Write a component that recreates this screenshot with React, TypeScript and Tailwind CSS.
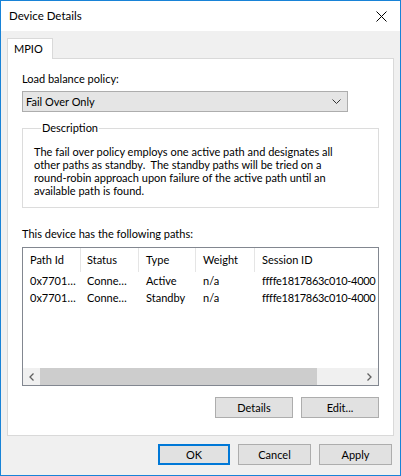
import React from "react";

const rows = [
  { id: "0x7701…", status: "Conne…", type: "Active", weight: "n/a", session: "ffffe1817863c010-4000" },
  { id: "0x7701…", status: "Conne…", type: "Standby", weight: "n/a", session: "ffffe1817863c010-4000" },
];

const cols = [
  { label: "Path Id", w: "w-[58px]", pl: "pl-[7px]" },
  { label: "Status", w: "w-[58px]", pl: "pl-[6px]" },
  { label: "Type", w: "w-[57px]", pl: "pl-[7px]" },
  { label: "Weight", w: "w-[59px]", pl: "pl-[7px]" },
  { label: "Session ID", w: "flex-1", pl: "pl-[7px]" },
];

function WinButton({
  children,
  primary,
  className,
}: {
  children: React.ReactNode;
  primary?: boolean;
  className?: string;
}) {
  return (
    <button
      className={`h-[21px] bg-[#e1e1e1] text-[11px] text-black flex items-center justify-center ${
        primary ? "border-2 border-[#0078d7]" : "border border-[#adadad]"
      } ${className ?? ""}`}
    >
      {children}
    </button>
  );
}

export default function App() {
  return (
    <div
      className="w-[401px] h-[476px] border border-[#1883d7] bg-[#f0f0f0] flex flex-col text-black text-[11px] leading-[16px]"
      style={{ fontFamily: 'Lato, "Noto Sans", sans-serif' }}
    >
      {/* title bar */}
      <div className="h-[30px] bg-white flex items-center justify-between pl-[8px] pr-[12px]">
        <span className="text-[11.5px]">Device Details</span>
        <svg width="11" height="11" viewBox="0 0 11 11" className="mr-[1px]">
          <path d="M0.5 0.5 L10.5 10.5 M10.5 0.5 L0.5 10.5" stroke="#000" strokeWidth="1" />
        </svg>
      </div>

      <div className="flex-1 flex flex-col px-[6px] pt-[7px]">
        {/* tab */}
        <div className="flex">
          <div className="relative z-10 -mb-px w-[46px] h-[21px] bg-white border border-b-0 border-[#d9d9d9] flex items-center pl-[6px]">
            MPIO
          </div>
        </div>

        {/* panel */}
        <div className="h-[378px] bg-white border border-[#d9d9d9] pl-[14px] pr-[11px] pt-[12px] flex flex-col">
          <div className="h-[16px]">Load balance policy:</div>
          <div className="mt-[4px] w-[326px] h-[21px] bg-[#e5e5e5] border border-[#adadad] flex items-center justify-between pl-[3px] pr-[6px]">
            <span>Fail Over Only</span>
            <svg width="9" height="5" viewBox="0 0 9 5">
              <path d="M0.5 0.5 L4.5 4.5 L8.5 0.5" stroke="#333" fill="none" strokeWidth="1" />
            </svg>
          </div>

          <fieldset className="mt-[8px] w-[357px] h-[88px] border border-[#dcdcdc] pl-[11px] pr-[4px]">
            <legend className="ml-[7px] px-[1px] leading-[16px]">Description</legend>
            <p className="mt-[9px] leading-[13px] whitespace-nowrap">
              The fail over policy employs one active path and designates all
              <br />
              other paths as standby.&nbsp; The standby paths will be tried on a
              <br />
              round-robin approach upon failure of the active path until an
              <br />
              available path is found.
            </p>
          </fieldset>

          <div className="mt-[18px] h-[16px]">This device has the following paths:</div>

          {/* list view */}
          <div className="mt-[5px] w-[357px] h-[139px] border border-[#828790] bg-white flex flex-col overflow-hidden">
            <div className="h-[24px] flex items-stretch">
              {cols.map((c, i) => (
                <div
                  key={c.label}
                  className={`${c.w} ${c.pl} flex items-center shrink-0 ${
                    i < cols.length - 1 ? "border-r border-[#e5e5e5]" : ""
                  }`}
                >
                  {c.label}
                </div>
              ))}
            </div>
            <div className="flex-1">
              {rows.map((r, idx) => (
                <div key={idx} className="h-[17px] flex items-center whitespace-nowrap">
                  <div className="w-[58px] pl-[7px] shrink-0">{r.id}</div>
                  <div className="w-[58px] pl-[6px] shrink-0">{r.status}</div>
                  <div className="w-[57px] pl-[7px] shrink-0">{r.type}</div>
                  <div className="w-[59px] pl-[7px] shrink-0">{r.weight}</div>
                  <div className="flex-1 pl-[7px] tracking-[-0.3px]">{r.session}</div>
                </div>
              ))}
            </div>
            {/* horizontal scrollbar */}
            <div className="h-[17px] bg-[#f0f0f0] flex items-center">
              <div className="w-[17px] h-[17px] flex items-center justify-center">
                <svg width="5" height="8" viewBox="0 0 5 8">
                  <path d="M4.5 0.5 L1 4 L4.5 7.5" stroke="#606060" fill="none" strokeWidth="1.3" />
                </svg>
              </div>
              <div className="flex-1 h-[17px] flex items-center">
                <div className="w-[277px] h-[17px] bg-[#cdcdcd]" />
              </div>
              <div className="w-[17px] h-[17px] flex items-center justify-center">
                <svg width="5" height="8" viewBox="0 0 5 8">
                  <path d="M0.5 0.5 L4 4 L0.5 7.5" stroke="#606060" fill="none" strokeWidth="1.3" />
                </svg>
              </div>
            </div>
          </div>

          <div className="mt-[11px] w-[357px] flex justify-end gap-[8px]">
            <WinButton className="w-[78px]">Details</WinButton>
            <WinButton className="w-[78px]">Edit...</WinButton>
          </div>
        </div>

        {/* dialog buttons */}
        <div className="mt-[8px] flex justify-end gap-[8px] pr-[2px]">
          <WinButton primary className="w-[72px]">
            OK
          </WinButton>
          <WinButton className="w-[73px]">Cancel</WinButton>
          <WinButton className="w-[73px]">Apply</WinButton>
        </div>
      </div>
    </div>
  );
}
